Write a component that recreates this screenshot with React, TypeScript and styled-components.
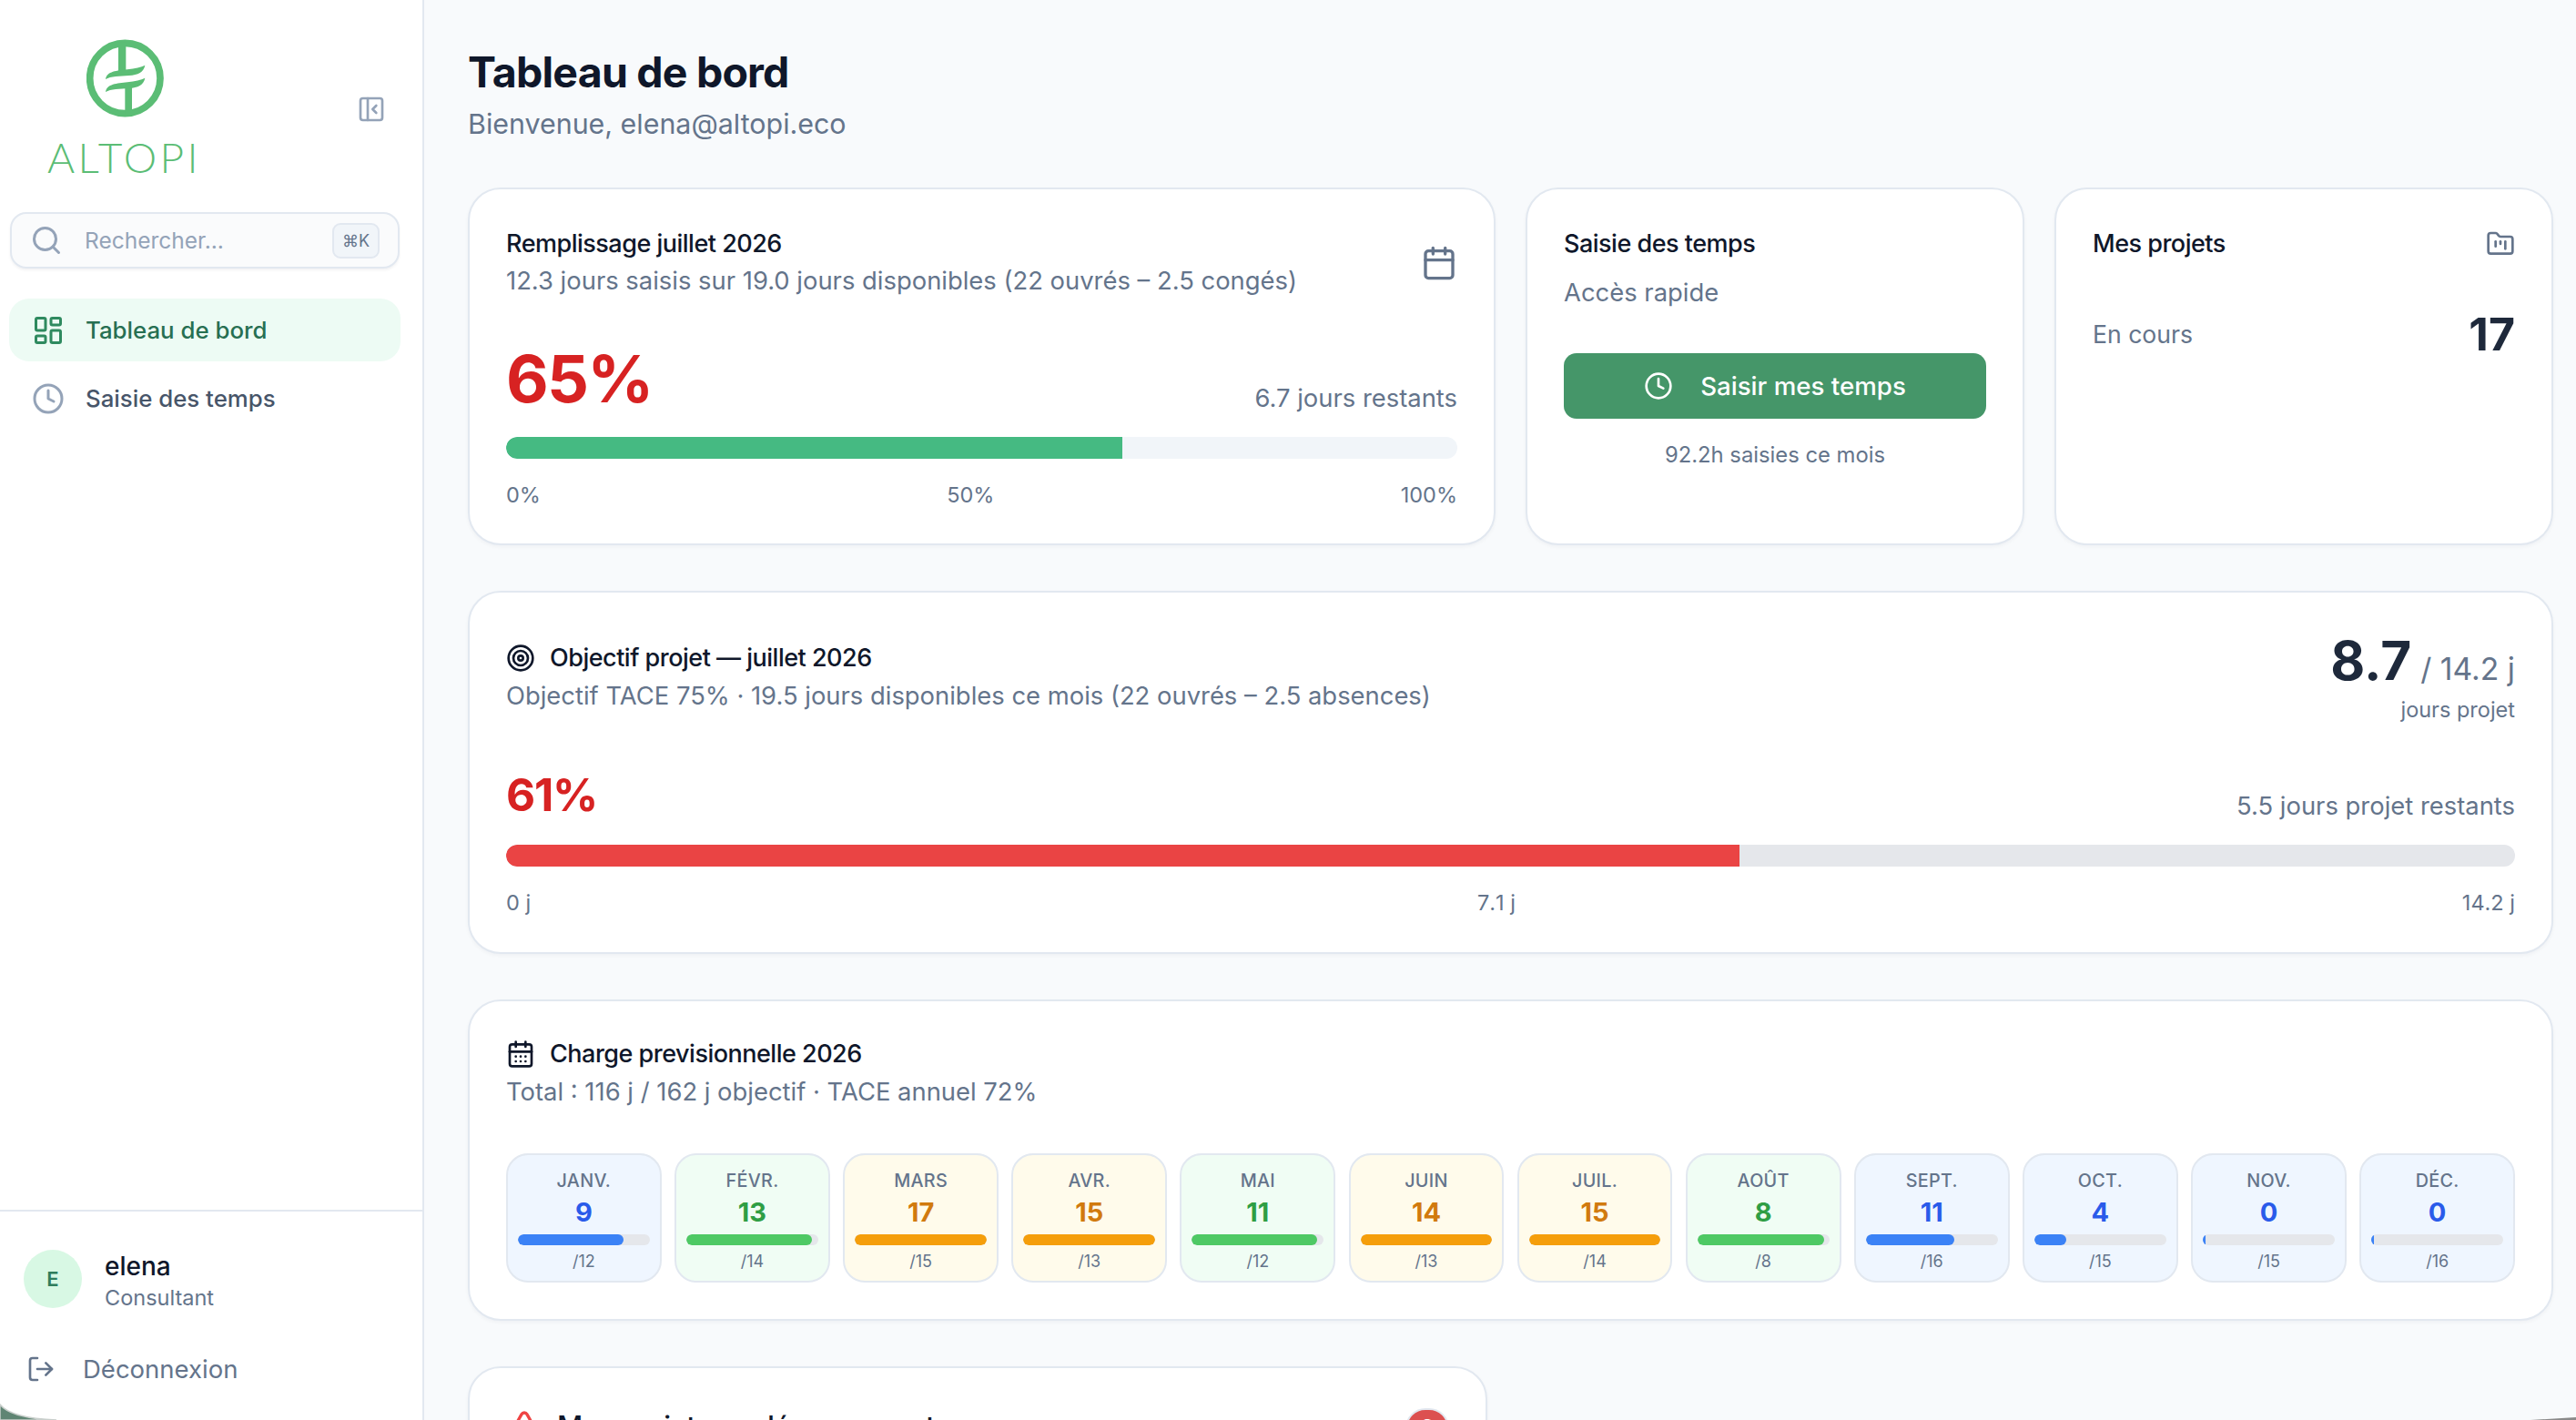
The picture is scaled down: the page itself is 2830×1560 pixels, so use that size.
import React from "react";
import styled, { createGlobalStyle } from "styled-components";
import {
  Calendar,
  CalendarDays,
  Clock,
  FolderKanban,
  LayoutDashboard,
  LogOut,
  PanelLeftClose,
  Search,
  Target,
  TriangleAlert,
} from "lucide-react";

const GlobalStyle = createGlobalStyle`
  html, body {
    margin: 0;
    height: 100%;
    overflow: hidden;
    background: #f8fafc;
  }
  * {
    box-sizing: border-box;
  }
  body {
    font-family: "Inter", "Liberation Sans", sans-serif;
    color: #0f172a;
  }
`;

const Shell = styled.div`
  position: relative;
  display: flex;
  width: 2830px;
  height: 1560px;
  overflow: hidden;
`;

const Sidebar = styled.aside`
  flex: 0 0 466px;
  display: flex;
  flex-direction: column;
  height: 100%;
  background: #fff;
  border-right: 2px solid #e2e8f0;
`;

const SidebarHead = styled.div`
  display: flex;
  align-items: center;
  justify-content: space-between;
  padding: 43px 40px 0 52px;
  color: #94a3b8;
  > svg {
    margin-top: 8px;
  }
`;

const Logo = styled.div`
  display: flex;
  flex-direction: column;
  align-items: flex-start;
  gap: 28px;
  svg {
    margin-left: 43px;
  }
`;

const LogoName = styled.span`
  font-family: "Lato", sans-serif;
  font-weight: 300;
  font-size: 46px;
  line-height: 32px;
  letter-spacing: 3.4px;
  color: #5bbd75;
`;

const SearchBox = styled.div`
  display: flex;
  align-items: center;
  height: 62px;
  margin: 44px 25px 0 11px;
  padding: 0 20px 0 20px;
  background: #fafbfc;
  border: 2px solid #e2e8f0;
  border-radius: 18px;
  box-shadow: 0 2px 3px rgba(15, 23, 42, 0.05);
  color: #94a3b8;
`;

const SearchText = styled.span`
  flex: 1;
  margin-left: 24px;
  font-size: 24.5px;
  color: #94a3b8;
`;

const Kbd = styled.span`
  display: flex;
  align-items: center;
  justify-content: center;
  width: 52px;
  height: 39px;
  background: #f1f5f9;
  border: 2px solid #e2e8f0;
  border-radius: 9px;
  font-size: 18px;
  color: #64748b;
`;

const Nav = styled.nav`
  display: flex;
  flex-direction: column;
  gap: 6px;
  margin: 33px 24px 0 10px;
`;

const NavItem = styled.a<{ $active?: boolean }>`
  display: flex;
  align-items: center;
  gap: 23px;
  height: 69px;
  padding: 0 0 0 25px;
  border-radius: 22px;
  font-size: 25.8px;
  font-weight: 500;
  background: ${(p) => (p.$active ? "#edfbf4" : "transparent")};
  color: ${(p) => (p.$active ? "#276f52" : "#475569")};
  svg {
    color: ${(p) => (p.$active ? "#2f8a5f" : "#94a3b8")};
  }
`;

const SidebarFoot = styled.div`
  margin-top: auto;
  padding: 35px 0 36px 26px;
  border-top: 2px solid #e2e8f0;
`;

const UserRow = styled.div`
  display: flex;
  align-items: center;
  gap: 25px;
`;

const Avatar = styled.div`
  display: flex;
  align-items: center;
  justify-content: center;
  width: 64px;
  height: 64px;
  border-radius: 50%;
  background: #d8f8e4;
  color: #2f7d5b;
  font-size: 22px;
  font-weight: 600;
`;

const UserInfo = styled.div`
  margin-top: 7px;
`;

const UserName = styled.div`
  font-size: 28px;
  line-height: 36px;
  font-weight: 500;
  color: #0f172a;
`;

const UserRole = styled.div`
  font-size: 23.5px;
  line-height: 34px;
  color: #64748b;
`;

const Logout = styled.a`
  display: flex;
  align-items: center;
  gap: 30px;
  height: 40px;
  margin: 41px 0 0 3px;
  font-size: 27.5px;
  color: #64748b;
`;

const Main = styled.main`
  flex: 1;
  min-width: 0;
  padding: 50px 25px 0 48px;
  background: #f8fafc;
`;

const PageTitle = styled.h1`
  margin: 0;
  font-size: 46.5px;
  line-height: 58px;
  font-weight: 700;
  letter-spacing: -0.8px;
  color: #0f172a;
`;

const PageSub = styled.p`
  margin: 6px 0 0;
  font-size: 30.4px;
  line-height: 44px;
  color: #64748b;
`;

const Stack = styled.div`
  display: flex;
  flex-direction: column;
  gap: 50px;
  margin-top: 48px;
`;

const TopGrid = styled.div`
  display: grid;
  grid-template-columns: repeat(4, 1fr);
  gap: 33px;
`;

const Card = styled.section`
  padding: 40px 40px 39px;
  background: #fff;
  border: 2px solid #e2e8f0;
  border-radius: 36px;
  box-shadow: 0 2px 4px rgba(15, 23, 42, 0.04);
`;

const TopCard = styled(Card)<{ $wide?: boolean }>`
  grid-column: ${(p) => (p.$wide ? "span 2" : "auto")};
  padding-top: 42px;
  padding-bottom: 38px;
`;

const PartialCard = styled(Card)`
  width: 1120px;
  height: 120px;
`;

const HeadRow = styled.div`
  display: flex;
  align-items: center;
  justify-content: space-between;
  color: #64748b;
`;

const TitleRow = styled.div`
  display: flex;
  align-items: center;
  gap: 16px;
  color: #0f172a;
`;

const CardTitle = styled.h3`
  margin: 0;
  font-size: 27px;
  line-height: 36px;
  font-weight: 500;
  letter-spacing: -0.5px;
  color: #0f172a;
`;

const BigTitle = styled(CardTitle)`
  font-size: 31px;
`;

const CardSub = styled.p<{ $gap?: number }>`
  margin: ${(p) => p.$gap ?? 4}px 0 0;
  font-size: 27.4px;
  line-height: 38px;
  color: #64748b;
`;

const StatRow = styled.div<{ $gap: number }>`
  display: flex;
  align-items: flex-end;
  justify-content: space-between;
  margin-top: ${(p) => p.$gap}px;
`;

const Percent = styled.span<{ $size: number; $line: number }>`
  font-size: ${(p) => p.$size}px;
  line-height: ${(p) => p.$line}px;
  font-weight: 700;
  letter-spacing: -0.025em;
  color: #d72222;
`;

const Remaining = styled.span`
  font-size: 27.4px;
  line-height: 36px;
  color: #64748b;
`;

const Track = styled.div<{ $bg: string }>`
  height: 24px;
  margin-top: 25px;
  border-radius: 12px;
  overflow: hidden;
  background: ${(p) => p.$bg};
`;

const Fill = styled.div<{ $color: string }>`
  height: 100%;
  background: ${(p) => p.$color};
  border-radius: 12px 0 0 12px;
`;

const Scale = styled.div`
  display: flex;
  justify-content: space-between;
  margin-top: 25px;
  font-size: 23.5px;
  font-kerning: none;
  line-height: 30px;
  color: #64748b;
`;

const PrimaryButton = styled.button`
  display: flex;
  align-items: center;
  justify-content: center;
  gap: 30px;
  width: 100%;
  height: 72px;
  margin-top: 48px;
  border: 0;
  border-radius: 14px;
  background: #459669;
  color: #fff;
  font-family: inherit;
  font-size: 27.7px;
  font-weight: 500;
`;

const Caption = styled.p`
  margin: 25px 0 0;
  font-size: 23.8px;
  line-height: 30px;
  text-align: center;
  color: #64748b;
`;

const CountRow = styled.div`
  display: flex;
  align-items: center;
  justify-content: space-between;
  height: 60px;
  margin-top: 51px;
`;

const CountLabel = styled.span`
  font-size: 26.6px;
  color: #64748b;
`;

const CountValue = styled.span`
  font-size: 50px;
  font-weight: 700;
  color: #1e293b;
`;

const ObjectiveHead = styled.div`
  display: flex;
  align-items: center;
  justify-content: space-between;
`;

const ObjectiveTotal = styled.div`
  text-align: right;
`;

const TotalLine = styled.div`
  display: flex;
  align-items: baseline;
  justify-content: flex-end;
  gap: 10px;
  height: 70px;
  padding-top: 6px;
  font-size: 33.7px;
  line-height: 1;
  color: #64748b;
  b {
    font-size: 58.5px;
    font-weight: 700;
    color: #1e293b;
  }
`;

const TotalLabel = styled.div`
  margin-top: 2px;
  font-size: 23.5px;
  line-height: 34px;
  color: #64748b;
`;

const MonthGrid = styled.div`
  display: grid;
  grid-template-columns: repeat(12, 1fr);
  gap: 14.4px;
  margin: 49px 0 1px;
`;

type Tone = "blue" | "green" | "amber";

const tones: Record<Tone, { bg: string; num: string; bar: string }> = {
  blue: { bg: "#eff6ff", num: "#2a5bea", bar: "#3b82f6" },
  green: { bg: "#f0fdf4", num: "#2f9e44", bar: "#4ec964" },
  amber: { bg: "#fffbeb", num: "#d17a0e", bar: "#f59e0b" },
};

const MonthCard = styled.div<{ $tone: Tone }>`
  height: 142px;
  padding: 13px 11px 0;
  text-align: center;
  background: ${(p) => tones[p.$tone].bg};
  border: 2px solid #e2e8f0;
  border-radius: 24px;
`;

const MonthName = styled.div`
  font-size: 19.8px;
  line-height: 30px;
  font-weight: 500;
  letter-spacing: 0.3px;
  color: #64748b;
`;

const MonthValue = styled.div<{ $tone: Tone }>`
  margin-top: 2px;
  font-size: 29px;
  line-height: 36px;
  font-weight: 700;
  color: ${(p) => tones[p.$tone].num};
`;

const MonthTrack = styled.div`
  height: 12px;
  margin-top: 6px;
  border-radius: 6px;
  overflow: hidden;
  background: #e5e7eb;
`;

const MonthFill = styled.div<{ $tone: Tone }>`
  height: 100%;
  border-radius: 6px;
  background: ${(p) => tones[p.$tone].bar};
`;

const MonthTarget = styled.div`
  margin-top: 5px;
  font-size: 18px;
  line-height: 26px;
  color: #64748b;
`;

const AlertIcon = styled.span`
  display: flex;
  color: #ef4444;
`;

const Badge = styled.span`
  display: flex;
  justify-content: center;
  width: 48px;
  height: 44px;
  margin-top: 4px;
  border: 2px solid #e2e8f0;
  border-radius: 24px;
  background: #dc5050;
  color: #fff;
  font-size: 25px;
  font-weight: 600;
  line-height: 40px;
`;

const CornerLeft = styled.svg`
  position: absolute;
  left: 0;
  bottom: 0;
`;

const CornerRight = styled.svg`
  position: absolute;
  right: 0;
  bottom: 0;
`;

const months: { name: string; value: number; target: number; fill: number; tone: Tone }[] = [
  { name: "JANV.", value: 9, target: 12, fill: 80, tone: "blue" },
  { name: "FÉVR.", value: 13, target: 14, fill: 95, tone: "green" },
  { name: "MARS", value: 17, target: 15, fill: 100, tone: "amber" },
  { name: "AVR.", value: 15, target: 13, fill: 100, tone: "amber" },
  { name: "MAI", value: 11, target: 12, fill: 95, tone: "green" },
  { name: "JUIN", value: 14, target: 13, fill: 100, tone: "amber" },
  { name: "JUIL.", value: 15, target: 14, fill: 100, tone: "amber" },
  { name: "AOÛT", value: 8, target: 8, fill: 96, tone: "green" },
  { name: "SEPT.", value: 11, target: 16, fill: 67, tone: "blue" },
  { name: "OCT.", value: 4, target: 15, fill: 24, tone: "blue" },
  { name: "NOV.", value: 0, target: 15, fill: 2, tone: "blue" },
  { name: "DÉC.", value: 0, target: 16, fill: 2, tone: "blue" },
];

function LogoMark() {
  return (
    <svg width="85" height="86" viewBox="285 130 255 258" fill="#5bbd75">
      <circle cx="412" cy="259" r="116" fill="none" stroke="#5bbd75" strokeWidth="23" />
      <rect x="390" y="140" width="25" height="100" />
      <rect x="412" y="280" width="23" height="96" />
      <path d="M348 262 C352 236 385 234 420 230 C445 227 465 222 478 216 C474 238 455 248 425 250 C395 252 365 252 348 262 Z" />
      <path d="M348 304 C352 278 385 276 420 272 C445 269 465 264 478 258 C474 280 455 290 425 292 C395 294 365 294 348 304 Z" />
    </svg>
  );
}

function App() {
  return (
    <Shell>
      <GlobalStyle />
      <Sidebar>
        <SidebarHead>
          <Logo>
            <LogoMark />
            <LogoName>ALTOPI</LogoName>
          </Logo>
          <PanelLeftClose size={32} />
        </SidebarHead>
        <SearchBox>
          <Search size={36} />
          <SearchText>Rechercher...</SearchText>
          <Kbd>⌘K</Kbd>
        </SearchBox>
        <Nav>
          <NavItem $active>
            <LayoutDashboard size={36} />
            Tableau de bord
          </NavItem>
          <NavItem>
            <Clock size={36} />
            Saisie des temps
          </NavItem>
        </Nav>
        <SidebarFoot>
          <UserRow>
            <Avatar>E</Avatar>
            <UserInfo>
              <UserName>elena</UserName>
              <UserRole>Consultant</UserRole>
            </UserInfo>
          </UserRow>
          <Logout>
            <LogOut size={32} />
            Déconnexion
          </Logout>
        </SidebarFoot>
      </Sidebar>

      <Main>
        <PageTitle>Tableau de bord</PageTitle>
        <PageSub>Bienvenue, elena@altopi.eco</PageSub>

        <Stack>
          <TopGrid>
            <TopCard $wide>
              <HeadRow>
                <div>
                  <CardTitle>Remplissage juillet 2026</CardTitle>
                  <CardSub $gap={3}>12.3 jours saisis sur 19.0 jours disponibles (22 ouvrés – 2.5 congés)</CardSub>
                </div>
                <Calendar size={40} />
              </HeadRow>
              <StatRow $gap={50}>
                <Percent $size={72} $line={78}>65%</Percent>
                <Remaining>6.7 jours restants</Remaining>
              </StatRow>
              <Track $bg="#f1f5f9">
                <Fill $color="#45ba82" style={{ width: "64.8%" }} />
              </Track>
              <Scale>
                <span>0%</span>
                <span>50%</span>
                <span>100%</span>
              </Scale>
            </TopCard>

            <TopCard>
              <CardTitle>Saisie des temps</CardTitle>
              <CardSub $gap={16}>Accès rapide</CardSub>
              <PrimaryButton>
                <Clock size={32} />
                Saisir mes temps
              </PrimaryButton>
              <Caption>92.2h saisies ce mois</Caption>
            </TopCard>

            <TopCard>
              <HeadRow>
                <CardTitle>Mes projets</CardTitle>
                <FolderKanban size={32} />
              </HeadRow>
              <CountRow>
                <CountLabel>En cours</CountLabel>
                <CountValue>17</CountValue>
              </CountRow>
            </TopCard>
          </TopGrid>

          <Card>
            <ObjectiveHead>
              <div>
                <TitleRow>
                  <Target size={32} />
                  <CardTitle>Objectif projet — juillet 2026</CardTitle>
                </TitleRow>
                <CardSub>Objectif TACE 75% · 19.5 jours disponibles ce mois (22 ouvrés – 2.5 absences)</CardSub>
              </div>
              <ObjectiveTotal>
                <TotalLine>
                  <b>8.7</b>
                  <span>/ 14.2 j</span>
                </TotalLine>
                <TotalLabel>jours projet</TotalLabel>
              </ObjectiveTotal>
            </ObjectiveHead>
            <StatRow $gap={46}>
              <Percent $size={49.5} $line={60}>61%</Percent>
              <Remaining>5.5 jours projet restants</Remaining>
            </StatRow>
            <Track $bg="#e5e7eb">
              <Fill $color="#ea4444" style={{ width: "61.4%" }} />
            </Track>
            <Scale>
              <span>0 j</span>
              <span>7.1 j</span>
              <span>14.2 j</span>
            </Scale>
          </Card>

          <Card>
            <TitleRow>
              <CalendarDays size={32} />
              <CardTitle>Charge previsionnelle 2026</CardTitle>
            </TitleRow>
            <CardSub>Total : 116 j / 162 j objectif · TACE annuel 72%</CardSub>
            <MonthGrid>
              {months.map((m) => (
                <MonthCard key={m.name} $tone={m.tone}>
                  <MonthName>{m.name}</MonthName>
                  <MonthValue $tone={m.tone}>{m.value}</MonthValue>
                  <MonthTrack>
                    <MonthFill $tone={m.tone} style={{ width: `${m.fill}%` }} />
                  </MonthTrack>
                  <MonthTarget>/{m.target}</MonthTarget>
                </MonthCard>
              ))}
            </MonthGrid>
          </Card>

          <PartialCard>
            <HeadRow>
              <TitleRow>
                <AlertIcon>
                  <TriangleAlert size={40} />
                </AlertIcon>
                <BigTitle>Mes projets en dépassement</BigTitle>
              </TitleRow>
              <Badge>2</Badge>
            </HeadRow>
          </PartialCard>
        </Stack>
      </Main>

      <CornerLeft width="70" height="20" viewBox="0 0 70 20">
        <path d="M0 3 Q12 18 62 20 L0 20 Z" fill="#5f8573" stroke="#c9cfcc" strokeWidth="1.5" />
      </CornerLeft>
      <CornerRight width="50" height="4" viewBox="0 0 50 4">
        <path d="M0 4 L50 1 L50 4 Z" fill="#8a8a8a" />
      </CornerRight>
    </Shell>
  );
}

export default App;
